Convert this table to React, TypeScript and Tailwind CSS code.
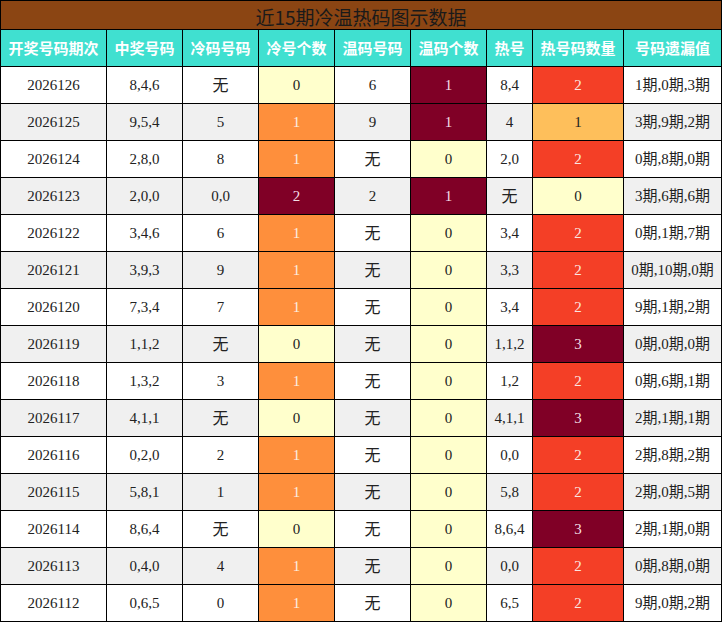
import React from 'react';

type Row = [string, string, string, number, string, number, string, number, string];

const rows: Row[] = [
  ['2026126', '8,4,6', '无', 0, '6', 1, '8,4', 2, '1期,0期,3期'],
  ['2026125', '9,5,4', '5', 1, '9', 1, '4', 1, '3期,9期,2期'],
  ['2026124', '2,8,0', '8', 1, '无', 0, '2,0', 2, '0期,8期,0期'],
  ['2026123', '2,0,0', '0,0', 2, '2', 1, '无', 0, '3期,6期,6期'],
  ['2026122', '3,4,6', '6', 1, '无', 0, '3,4', 2, '0期,1期,7期'],
  ['2026121', '3,9,3', '9', 1, '无', 0, '3,3', 2, '0期,10期,0期'],
  ['2026120', '7,3,4', '7', 1, '无', 0, '3,4', 2, '9期,1期,2期'],
  ['2026119', '1,1,2', '无', 0, '无', 0, '1,1,2', 3, '0期,0期,0期'],
  ['2026118', '1,3,2', '3', 1, '无', 0, '1,2', 2, '0期,6期,1期'],
  ['2026117', '4,1,1', '无', 0, '无', 0, '4,1,1', 3, '2期,1期,1期'],
  ['2026116', '0,2,0', '2', 1, '无', 0, '0,0', 2, '2期,8期,2期'],
  ['2026115', '5,8,1', '1', 1, '无', 0, '5,8', 2, '2期,0期,5期'],
  ['2026114', '8,6,4', '无', 0, '无', 0, '8,6,4', 3, '2期,1期,0期'],
  ['2026113', '0,4,0', '4', 1, '无', 0, '0,0', 2, '0期,8期,0期'],
  ['2026112', '0,6,5', '0', 1, '无', 0, '6,5', 2, '9期,0期,2期'],
];

const headers = ['开奖号码期次', '中奖号码', '冷码号码', '冷号个数', '温码号码', '温码个数', '热号', '热号码数量', '号码遗漏值'];
const widths = [106, 76, 76, 76, 76, 76, 46, 91, 98];

const coldColor: Record<number, string> = {
  0: 'bg-[#ffffcc] text-[#222]',
  1: 'bg-[#fe8f3c] text-[#fbeee0]',
  2: 'bg-[#800026] text-[#f3dfe4]',
};
const warmColor: Record<number, string> = {
  0: 'bg-[#ffffcc] text-[#222]',
  1: 'bg-[#800026] text-[#f3dfe4]',
};
const hotColor: Record<number, string> = {
  0: 'bg-[#ffffcc] text-[#222]',
  1: 'bg-[#febf5b] text-[#222]',
  2: 'bg-[#f43f26] text-[#fbe6e0]',
  3: 'bg-[#800026] text-[#f3dfe4]',
};

function Val({ v }: { v: string }) {
  if (v === '无') {
    return <span className="text-[16px] font-['Noto_Sans_CJK_SC',sans-serif]">无</span>;
  }
  return <span>{v}</span>;
}

const td = 'border border-black p-0 h-[37px] text-center align-middle';

export default function App() {
  return (
    <div className="w-[722px] bg-white">
      <table className="w-[722px] table-fixed border-collapse font-['Liberation_Serif','Noto_Sans_CJK_SC',serif] text-[15px] text-[#222]">
        <colgroup>
          {widths.map((w, i) => (
            <col key={i} style={{ width: w }} />
          ))}
        </colgroup>
        <thead>
          <tr>
            <th
              colSpan={9}
              className="border border-black p-0 pt-[2px] h-[29px] bg-[#8b4513] text-[19px] font-normal text-[#1a1a1a] leading-none font-['Noto_Sans_CJK_SC',sans-serif]"
            >
              近15期冷温热码图示数据
            </th>
          </tr>
          <tr>
            {headers.map((h) => (
              <th
                key={h}
                className="border border-black p-0 h-[37px] bg-[#40e0d0] text-white text-[15px] font-bold font-['Noto_Sans_CJK_SC',sans-serif] whitespace-nowrap"
              >
                {h}
              </th>
            ))}
          </tr>
        </thead>
        <tbody>
          {rows.map((r, i) => {
            const bg = i % 2 === 1 ? 'bg-[#f0f0f0]' : 'bg-white';
            return (
              <tr key={r[0]} className={bg}>
                <td className={td}>{r[0]}</td>
                <td className={td}>{r[1]}</td>
                <td className={td}>
                  <Val v={r[2]} />
                </td>
                <td className={`${td} ${coldColor[r[3]]}`}>{r[3]}</td>
                <td className={td}>
                  <Val v={r[4]} />
                </td>
                <td className={`${td} ${warmColor[r[5]]}`}>{r[5]}</td>
                <td className={td}>
                  <Val v={r[6]} />
                </td>
                <td className={`${td} ${hotColor[r[7]]}`}>{r[7]}</td>
                <td className={`${td} whitespace-nowrap`}>{r[8]}</td>
              </tr>
            );
          })}
        </tbody>
      </table>
    </div>
  );
}
